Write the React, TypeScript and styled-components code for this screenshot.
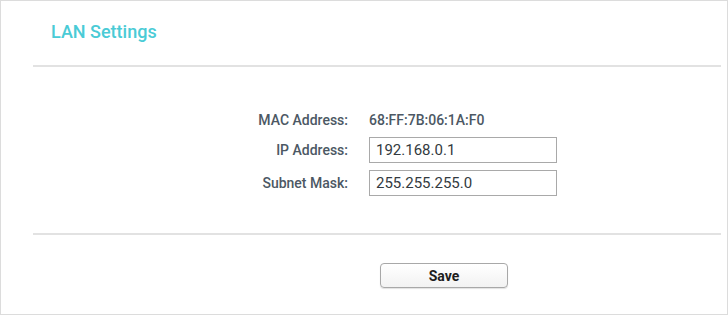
import React from 'react';
import styled, { createGlobalStyle } from 'styled-components';

const GlobalStyle = createGlobalStyle`
  html, body {
    margin: 0;
    padding: 0;
    background: #ffffff;
  }

  body {
    font-family: Roboto, 'Liberation Sans', Arial, sans-serif;
  }
`;

const rows = [
  { label: 'MAC Address:', value: '68:FF:7B:06:1A:F0', editable: false },
  { label: 'IP Address:', value: '192.168.0.1', editable: true },
  { label: 'Subnet Mask:', value: '255.255.255.0', editable: true },
];

const App = () => {
  return (
    <Panel>
      <GlobalStyle />
      <Title>LAN Settings</Title>
      <Divider />
      <Form>
        {rows.map((row) => (
          <Row key={row.label} $tall={row.editable}>
            <Label>{row.label}</Label>
            {row.editable ? (
              <TextInput defaultValue={row.value} />
            ) : (
              <StaticValue>{row.value}</StaticValue>
            )}
          </Row>
        ))}
      </Form>
      <Divider />
      <Actions>
        <SaveButton type="button">Save</SaveButton>
      </Actions>
    </Panel>
  );
};

const Panel = styled.div`
  box-sizing: border-box;
  width: 728px;
  height: 315px;
  border: 1px solid #dcdcdc;
  background: #ffffff;
  display: flex;
  flex-direction: column;
`;

const Title = styled.h2`
  margin: 0;
  padding: 20px 0 0 50px;
  height: 45px;
  box-sizing: border-box;
  font-size: 18px;
  font-weight: 500;
  line-height: 22px;
  color: #4acbd6;
`;

const Divider = styled.div`
  height: 2px;
  margin: 19px 6px 0 32px;
  background: #e2e2e2;
`;

const Form = styled.div`
  display: flex;
  flex-direction: column;
  gap: 7px;
  padding-top: 40px;
  padding-bottom: 18px;
`;

const Row = styled.div<{ $tall: boolean }>`
  display: grid;
  grid-template-columns: 347px 188px;
  column-gap: 21px;
  align-items: center;
  height: 26px;
  margin-bottom: ${(p) => (p.$tall ? '0' : '-3px')};
`;

const Label = styled.span`
  text-align: right;
  font-size: 14px;
  font-weight: 500;
  color: #4c5864;
`;

const StaticValue = styled.span`
  font-size: 14px;
  font-weight: 500;
  color: #4c5864;
`;

const TextInput = styled.input`
  box-sizing: border-box;
  width: 188px;
  height: 26px;
  margin: 0;
  padding: 0 6px;
  border: 1px solid #a9a9a9;
  border-radius: 0;
  font-family: Roboto, 'Liberation Sans', Arial, sans-serif;
  font-size: 15px;
  color: #333a40;
  outline: none;
`;

const Actions = styled.div`
  display: flex;
  padding: 28px 0 0 379px;
`;

const SaveButton = styled.button`
  box-sizing: border-box;
  width: 128px;
  height: 25px;
  border: 1px solid #a8a8a8;
  border-radius: 4px;
  background: linear-gradient(#ffffff, #f2f2f2);
  box-shadow: 0 1px 1px rgba(0, 0, 0, 0.12);
  font-family: Roboto, 'Liberation Sans', Arial, sans-serif;
  font-size: 14px;
  font-weight: 700;
  color: #1e1e1e;
  cursor: pointer;
`;

export default App;
